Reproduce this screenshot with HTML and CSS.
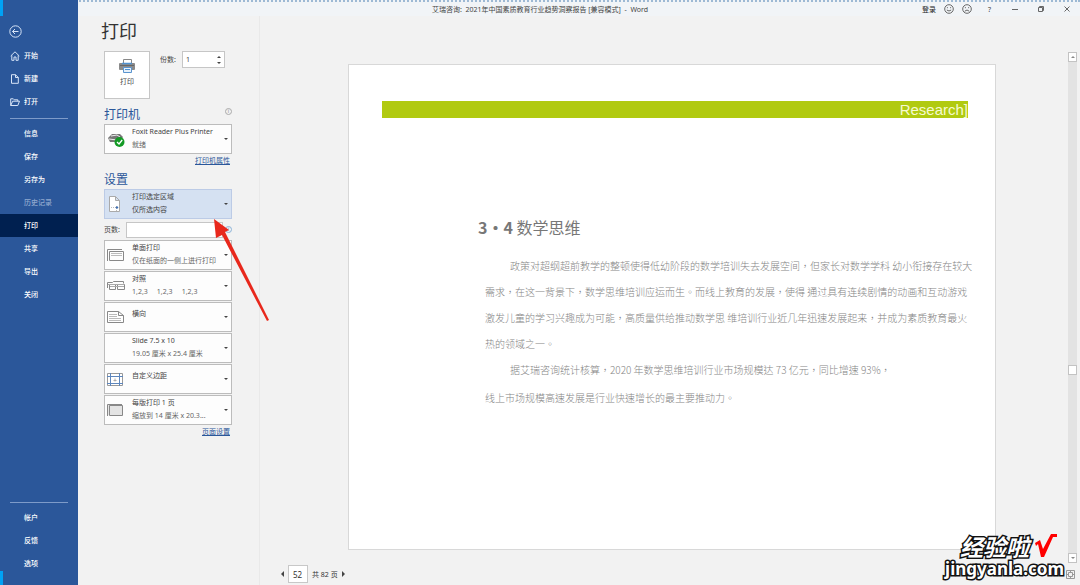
FILE: index.html
```html
<!DOCTYPE html>
<html lang="zh-CN">
<head>
<meta charset="utf-8">
<title>打印 - Word</title>
<link rel="stylesheet" href="styles.css">
</head>
<body>
<div class="app">
  <header class="titlebar">
    <h1 class="doc-title">艾瑞咨询: &nbsp;2021年中国素质教育行业趋势洞察报告 [兼容模式] &nbsp;- &nbsp;Word</h1>
    <div class="window-tools">
      <button class="tool login">登录</button>
      <button class="tool" aria-label="满意"><svg width="10" height="10" viewBox="0 0 10 10"><circle cx="5" cy="5" r="4.3"/><path d="M3.4 3.2v1M6.6 3.2v1M2.8 6q2.2 2 4.4 0"/></svg></button>
      <button class="tool" aria-label="不满意"><svg width="10" height="10" viewBox="0 0 10 10"><circle cx="5" cy="5" r="4.3"/><path d="M3.4 3.2v1M6.6 3.2v1M2.8 7.2q2.2-2.4 4.4 0"/></svg></button>
      <button class="tool help">?</button>
      <button class="tool" aria-label="最小化"><svg width="8" height="8" viewBox="0 0 8 8"><path d="M1 4.5h6"/></svg></button>
      <button class="tool" aria-label="还原"><svg width="8" height="8" viewBox="0 0 8 8"><path d="M1.5 2.5h4v4h-4zM2.5 2.5v-1h4v4h-1"/></svg></button>
      <button class="tool" aria-label="关闭"><svg width="8" height="8" viewBox="0 0 8 8"><path d="M1.5 1.5l5 5M6.5 1.5l-5 5"/></svg></button>
    </div>
  </header>

  <nav class="sidebar">
    <button class="back" aria-label="返回"><svg width="13" height="13" viewBox="0 0 13 13"><circle cx="6.5" cy="6.5" r="5.7"/><path d="M9.5 6.5h-6M6 4L3.5 6.500L6 9"/></svg></button>
    <a class="nav-item" href="#"><svg width="10" height="10" viewBox="0 0 10 10"><path d="M.7 5L5 .8 9.300 5M1.800 4.300v5h2.200V6h2v3.300h2.200v-5"/></svg>开始</a>
    <a class="nav-item" href="#"><svg width="10" height="10" viewBox="0 0 10 10"><path d="M1.500.7h4l2.800 2.800v5.800H1.500zM5.500.7v2.800h2.800"/></svg>新建</a>
    <a class="nav-item" href="#"><svg width="10" height="10" viewBox="0 0 10 10"><path d="M.7 8.500V1.800h2.600l1 1h3.500v1.400M.7 8.500l2-4.300h6.800L7.800 8.500z"/></svg>打开</a>
    <hr class="rule">
    <a class="nav-item" href="#">信息</a>
    <a class="nav-item" href="#">保存</a>
    <a class="nav-item" href="#">另存为</a>
    <a class="nav-item muted" href="#">历史记录</a>
    <a class="nav-item current" href="#">打印</a>
    <a class="nav-item" href="#">共享</a>
    <a class="nav-item" href="#">导出</a>
    <a class="nav-item" href="#">关闭</a>
    <hr class="rule last">
    <a class="nav-item" href="#">帐户</a>
    <a class="nav-item" href="#">反馈</a>
    <a class="nav-item" href="#">选项</a>
  </nav>

  <section class="settings">
    <h2 class="page-title">打印</h2>
    <div class="print-row">
      <button class="print-button">
        <svg width="18" height="18" viewBox="0 0 18 18"><path d="M5.500 7V2.500h8V7" fill="#fff" stroke="#888"/><rect x="1" y="6" width="16" height="7" rx="1" fill="#8a8a8a"/><path d="M2 8.500h14" stroke="#666"/><path d="M4 6.500h10" stroke="#4f91d0" stroke-width="1.500"/><path d="M5.500 10.500h8v5h-8z" fill="#e6f0fa" stroke="#5a94cf"/><path d="M7 12.500h5" stroke="#4f91d0"/></svg>
        打印
      </button>
      <label class="small-label" for="copies">份数:</label>
      <div class="spin"><input id="copies" value="1"><span class="spin-arrows"><i class="up"></i><i class="down"></i></span></div>
    </div>

    <div class="section-head"><h3>打印机</h3><span class="info">i</span></div>
    <button class="combo">
      <svg width="18" height="18" viewBox="0 0 18 18"><path d="M1 8l4-4h8l3 3-3 5H3z" fill="#777"/><path d="M4 6l6-1 3 2M2 9l8 1" stroke="#eee" fill="none"/><circle cx="12.500" cy="12" r="5" fill="#139a25"/><path d="M10 12l2 2 3.200-4" fill="none" stroke="#fff" stroke-width="1.300"/></svg>
      <span class="combo-text"><span>Foxit Reader Plus Printer</span><span class="sub">就绪</span></span><i class="down"></i>
    </button>
    <a class="link" href="#">打印机属性</a>

    <div class="section-head second"><h3>设置</h3></div>
    <div class="options">
      <button class="combo selected">
        <svg width="18" height="18" viewBox="0 0 18 18"><path d="M2.500 1.500h6l4 4v11h-10zM8.500 1.500v4h4" fill="#fff" stroke="#aaa"/><path d="M4 12.500h7M9.500 11v5" stroke="#bbb" stroke-dasharray="1 1"/><path d="M10 11l1.500 1.500L10 14l-1.500-1.500z" fill="#3c6eb4"/></svg>
        <span class="combo-text"><span>打印选定区域</span><span>仅所选内容</span></span><i class="down"></i>
      </button>
      <div class="pages-row"><label class="small-label" for="pages">页数:</label><input id="pages"><span class="info blue">i</span></div>
      <button class="combo">
        <svg width="18" height="18" viewBox="0 0 18 18"><path d="M.5 15V3.500H15M2.500 5.500h14v9h-14z" fill="none" stroke="#888"/><path d="M4 7.500h11M4 9.500h11" stroke="#bbb"/></svg>
        <span class="combo-text"><span>单面打印</span><span class="sub">仅在纸面的一侧上进行打印</span></span><i class="down"></i>
      </button>
      <button class="combo">
        <svg width="18" height="18" viewBox="0 0 18 18"><path d="M.5 11V5.500h5l1-1h10v2M2.500 12.500v-5h6v5zM10.500 7.500h7v5h-7z" fill="none" stroke="#888"/><path d="M1 7.500h16M3 9.500h14" stroke="#aaa"/></svg>
        <span class="combo-text"><span>对照</span><span class="sub">1,2,3 &nbsp; &nbsp; 1,2,3 &nbsp; &nbsp; 1,2,3</span></span><i class="down"></i>
      </button>
      <button class="combo single">
        <svg width="18" height="18" viewBox="0 0 18 18"><path d="M.5 3.500h11l5 4v7h-16zM11.500 3.500v4h5" fill="#fff" stroke="#888"/><path d="M2 6.500h8M2 8.500h8M2 10.500h12M2 12.500h12" stroke="#bbb"/></svg>
        <span class="combo-text"><span>横向</span></span><i class="down"></i>
      </button>
      <button class="combo">
        <span class="blank"></span>
        <span class="combo-text"><span>Slide 7.5 x 10</span><span class="sub">19.05 厘米 x 25.4 厘米</span></span><i class="down"></i>
      </button>
      <button class="combo single">
        <svg width="18" height="18" viewBox="0 0 18 18"><path d="M.5 3.500h15v12H.5z" fill="#fff" stroke="#999"/><path d="M3.500 3v13M12.500 3v13M0 6.500h16M0 13.500h16" stroke="#5d86bd"/><path d="M6.500 10.500h3M8 8.500v3" stroke="#aaa"/></svg>
        <span class="combo-text"><span>自定义边距</span></span><i class="down"></i>
      </button>
      <button class="combo">
        <svg width="18" height="18" viewBox="0 0 18 18"><path d="M.5 15V3.500H15M2.500 4.500h13v10h-13z" fill="#e4e4e4" stroke="#888"/></svg>
        <span class="combo-text"><span>每版打印 1 页</span><span class="sub">缩放到 14 厘米 x 20.3...</span></span><i class="down"></i>
      </button>
    </div>
    <a class="link" href="#">页面设置</a>
  </section>

  <main class="preview">
    <div class="canvas">
      <article class="sheet" lang="zh-TW">
        <div class="banner">Research]</div>
        <h2 class="heading"><b>3・4</b> 数学思维</h2>
        <p class="para"><span class="indent"></span>政策对超纲超前教学的整顿使得低幼阶段的数学培训失去发展空间，但家长对数学学科 幼小衔接存在较大<br>需求，在这一背景下，数学思维培训应运而生。而线上教育的发展，使得 通过具有连续剧情的动画和互动游戏<br>激发儿童的学习兴趣成为可能，高质量供给推动数学思 维培训行业近几年迅速发展起来，并成为素质教育最火<br>热的领域之一。<br><span class="indent"></span>据艾瑞咨询统计核算，2020 年数学思维培训行业市场规模达 73 亿元，同比增速 93%，</p>
        <p class="para after">线上市场规模高速发展是行业快速增长的最主要推动力。</p>
      </article>
      <div class="scrollbar">
        <button class="scroll-button" aria-label="向上"><i class="up"></i></button>
        <span class="thumb"></span>
        <button class="scroll-button" aria-label="向下"><i class="down"></i></button>
      </div>
    </div>
    <footer class="pager">
      <button class="tool" aria-label="上一页"><i class="left"></i></button>
      <input value="52" aria-label="页码">
      <span>共 82 页</span>
      <button class="tool" aria-label="下一页"><i class="right"></i></button>
      <button class="tool fit" aria-label="缩放到页面"><svg width="9" height="9" viewBox="0 0 9 9"><path d="M.5.5h8v8h-8zM2.500 2.500h4v4h-4zM4.500 0v3M4.500 6v3M0 4.500h3M6 4.500h3"/></svg></button>
    </footer>
  </main>
</div>
<svg class="pointer" width="58" height="104" viewBox="0 0 58 104"><path d="M2 1l15 11-4 2 44 88-2 1L10 17l-6 3z" fill="#e8281c"/></svg>
<div class="watermark">
  <div class="mark-top"><span>经验啦</span><svg width="24" height="26" viewBox="0 0 24 26"><path d="M1 10l5-3 3 9L17 1h6v3h-4L10 24H7L4 11l-2 2z" fill="#f00"/></svg></div>
  <div class="mark-site">jingyanla.com</div>
</div>
</body>
</html>
```
FILE: styles.css
```css
* { box-sizing: border-box; }

body {
  margin: 0;
  background: #f2f2f2;
  color: #444;
  font: 7px/13px "Noto Sans", "Noto Sans CJK SC", sans-serif;
}

button, input { font: inherit; color: inherit; margin: 0; padding: 0; border-radius: 0; }
button { background: none; border: 0; }
h1, h2, h3, p { margin: 0; font-weight: 400; }
svg { display: block; flex: none; }

.app {
  display: grid;
  grid-template-columns: 78px 182px minmax(0, 1fr);
  grid-template-rows: 16px 1fr;
  min-height: 100vh;
}

.titlebar {
  grid-area: 1 / 1 / 2 / -1;
  display: grid;
  grid-template-columns: 1fr auto 1fr;
  align-items: center;
  border-top: 2px dotted #9db9d4;
  background: #f1f4f7;
}
.doc-title { grid-column: 2; font-size: 7px; line-height: 13px; }
.window-tools { display: flex; justify-content: flex-end; align-items: center; gap: 8px; padding-right: 9px; }
.tool svg { fill: none; stroke: #666; stroke-width: 1; }
.window-tools .tool:nth-child(n+5) { margin-left: 10px; }
.help { padding: 0 2px 0 8px; }
.login { color: #222; }

.sidebar {
  grid-area: 1 / 1 / 3 / 2;
  z-index: 1;
  display: flex;
  flex-direction: column;
  padding: 25px 0 10px;
  color: #fff;
  background:
    linear-gradient(#00a2f5, #00a2f5) 0 0 / 3px 16px no-repeat,
    linear-gradient(#00a2f5, #00a2f5) 0 100% / 3px 14px no-repeat,
    #2b579a;
}
.sidebar svg { fill: none; stroke: #d7e4f7; stroke-width: 1; }
.back { align-self: flex-start; margin: 0 0 6px 9px; }
.nav-item {
  display: flex;
  align-items: center;
  height: 23px;
  padding-left: 24px;
  color: inherit;
  text-decoration: none;
  font-weight: 500;
}
.nav-item svg { margin: 0 4px 0 -14px; }
.nav-item.muted { color: #8fa8ce; }
.nav-item.current { background: #002050; }
.rule { width: 58px; margin: 5px 10px 3px; border: 0; border-top: 1px solid #7e9bc9; }
.rule.last { margin-top: auto; }

.settings {
  grid-area: 2 / 2 / 3 / 3;
  display: flex;
  flex-direction: column;
  padding: 3px 27px 0 26px;
  border-right: 1px solid #e9e9e9;
}
.page-title { margin-left: -3px; font-size: 18px; line-height: 24px; color: #333; }
.print-row { display: flex; align-items: flex-start; margin-top: 8px; }
.print-button {
  display: flex;
  flex-direction: column;
  align-items: center;
  width: 46px;
  height: 48px;
  padding-top: 5px;
  border: 1px solid #c6c6c6;
  background: #fff;
}
.print-row .small-label { margin: 2px 6px 0 10px; }
.spin { display: flex; align-items: center; width: 43px; height: 17px; border: 1px solid #c6c6c6; background: #fff; }
.spin input { flex: 1; min-width: 0; padding-left: 3px; border: 0; background: none; }
.spin-arrows { display: flex; flex-direction: column; gap: 4px; padding-right: 3px; }

.up, .down, .left, .right { flex: none; display: block; border: 2px solid transparent; }
.up { border-top: 0; border-bottom-color: #444; }
.down { border-bottom: 0; border-top-color: #444; }
.left { border-width: 3px; border-left: 0; border-right-color: #444; }
.right { border-width: 3px; border-right: 0; border-left-color: #444; }

.section-head { display: flex; justify-content: space-between; margin-top: 6px; }
.section-head h3 { font-size: 12px; line-height: 19px; color: #2b579a; }
.section-head.second { margin-top: 3px; }
.info {
  width: 7px;
  height: 7px;
  margin-top: 3px;
  border: 1px solid #aaa;
  border-radius: 50%;
  color: #888;
  font-size: 5px;
  line-height: 5px;
  text-align: center;
}
.info.blue { margin: 0; border-color: #8bb3d8; color: #4c8cc7; }

.combo {
  display: flex;
  align-items: center;
  gap: 7px;
  width: 100%;
  height: 30px;
  padding: 0 3px 0 2px;
  border: 1px solid #bcbcbc;
  background: #fdfdfd;
  text-align: left;
}
.combo.selected { border-color: #bccbe6; background: #d5e1f2; }
.combo-text { flex: 1; min-width: 0; display: flex; flex-direction: column; height: 28px; white-space: nowrap; }
.combo.single .combo-text { padding-top: 4px; }
.sub { color: #666; }
.blank { width: 18px; }
.combo .down { margin-left: -7px; }
.link { align-self: flex-end; margin-right: 2px; color: #2b579a; text-decoration: underline; }
.options { display: flex; flex-direction: column; gap: 1px; }
.pages-row { display: flex; align-items: center; height: 19px; }
.pages-row input { flex: 1; min-width: 0; height: 16px; margin: 0 2px 0 6px; border: 1px solid #c6c6c6; background: #fff; }

.preview { grid-area: 2 / 3 / 3 / 4; display: flex; flex-direction: column; }
.canvas { flex: 1; display: flex; justify-content: space-between; padding: 36px 3px 0 88px; }
.sheet {
  flex: 1;
  align-self: flex-start;
  min-width: 0;
  aspect-ratio: 4 / 3;
  margin: 12px 72px 0 0;
  padding: 36px 27px 0 33px;
  border: 1px solid #d8d8d8;
  background: #fff;
  color: #858585;
  font-family: "Noto Sans CJK TC", sans-serif;
}
.banner {
  height: 17px;
  background: #b1ca10;
  color: #f6fad2;
  font: 15px/17px "Liberation Sans", Arial, sans-serif;
  text-align: right;
}
.heading { margin: 96px 0 0 96px; font-size: 16px; line-height: 26px; color: #777; }
.para { margin: 13px 0 0 103px; font-size: 10px; line-height: 26px; font-weight: 300; white-space: nowrap; }
.para.after { margin-top: 2px; }
.indent { display: inline-block; width: 25px; }

.scrollbar { display: flex; flex-direction: column; align-items: center; width: 9px; background: #e3e3e3; }
.scroll-button { display: flex; align-items: center; justify-content: center; width: 9px; height: 10px; border: 1px solid #c3c3c3; background: #fff; }
.scroll-button .up { border-bottom-color: #888; }
.scroll-button .down { border-top-color: #888; }
.thumb { width: 9px; height: 10px; margin: 303px 0 auto; border: 1px solid #c3c3c3; background: #fff; }

.pager { display: flex; align-items: center; gap: 4px; height: 22px; padding: 0 5px 0 21px; color: #333; }
.pager input { width: 20px; height: 18px; padding-left: 4px; border: 1px solid #c8c8c8; background: #fff; font-size: 8px; }
.pager .fit { margin-left: auto; }
.fit svg { stroke: #999; }

.pointer { position: absolute; left: 212px; top: 218px; z-index: 2; }
.watermark {
  position: absolute;
  right: 16px;
  bottom: 6px;
  z-index: 2;
  color: #fff;
  font-family: "Noto Sans CJK SC", sans-serif;
  font-weight: 700;
  -webkit-text-stroke: 3px #111;
  paint-order: stroke fill;
}
.mark-top { display: flex; align-items: center; justify-content: flex-end; gap: 5px; padding-right: 6px; font-size: 23px; line-height: 26px; font-style: italic; }
.mark-site { font: 700 17px/20px "Noto Sans", sans-serif; text-align: right; }
```
